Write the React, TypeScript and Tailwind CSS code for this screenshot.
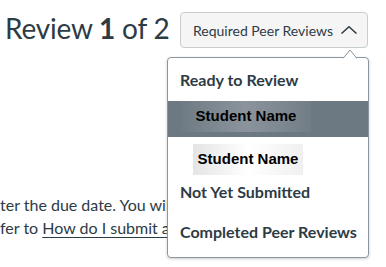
export default function App() {
  return (
    <div className="relative h-[267px] w-[386px] overflow-hidden bg-white text-[#2d3b45]" style={{ fontFamily: 'Lato, "Noto Sans", sans-serif' }}>
      <div className="flex items-start pt-3">
        <h1 className="ml-[5px] -mt-[1px] text-[28px] leading-[34px] tracking-[-0.2px]">
          Review <span className="font-bold">1</span> of 2
        </h1>
        <button className="ml-auto mr-[18px] flex h-[36px] w-[188px] items-center rounded-[4px] border border-[#c7cdd1] bg-[#f5f5f5] pl-[12px] text-[14px] text-[#2d3b45]">
          <span>Required Peer Reviews</span>
          <svg className="ml-[8px]" width="16" height="8" viewBox="0 0 16 8" fill="none">
            <path d="M0.5 7.5 L8 0.8 L15.5 7.5" stroke="#2d3b45" strokeWidth="1.5" />
          </svg>
        </button>
      </div>

      <div className="mt-[145px] whitespace-nowrap text-[16px] leading-[23px]">
        <p>ter the due date. You will be notified when</p>
        <p>
          fer to <span className="underline decoration-1 underline-offset-[3px]">How do I submit a peer review</span>
        </p>
      </div>

      <div className="absolute left-[167px] top-[57px] h-[201px] w-[202px] rounded-[4px] border border-[#8b969e] bg-white shadow-[0_1px_3px_rgba(0,0,0,0.2)]">
        <svg className="absolute -top-[9px] left-[175px]" width="14" height="10" viewBox="0 0 14 10">
          <path d="M0 9.5 L7 1 L14 9.5" fill="white" stroke="#8b969e" strokeWidth="1" />
        </svg>
        <div className="pt-[10px]">
          <div className="pl-[12px] text-[16px] font-bold leading-[24px]">Ready to Review</div>
          <div className="mt-[9px] h-[36px] bg-[#6c7882]">
            <div
              className="ml-[13px] flex h-[31px] w-[130px] items-center justify-center text-[15px] font-bold text-black"
              style={{ fontFamily: '"Liberation Sans", Arial, sans-serif', background: 'linear-gradient(90deg,#6f7a84 0%,#8b949c 50%,#727d86 100%)' }}
            >
              Student Name
            </div>
          </div>
          <div className="h-[43px] pt-[7px]">
            <div
              className="ml-[25px] flex h-[31px] w-[110px] items-center justify-center text-[15px] font-bold text-black"
              style={{ fontFamily: '"Liberation Sans", Arial, sans-serif', background: 'linear-gradient(90deg,#e4e4e4 0%,#ffffff 50%,#f0f0f0 100%)' }}
            >
              Student Name
            </div>
          </div>
          <div className="pl-[12px] text-[16px] font-bold leading-[24px]">Not Yet Submitted</div>
          <div className="mt-[16px] pl-[12px] text-[16px] font-bold leading-[24px]">Completed Peer Reviews</div>
        </div>
      </div>
    </div>
  )
}
